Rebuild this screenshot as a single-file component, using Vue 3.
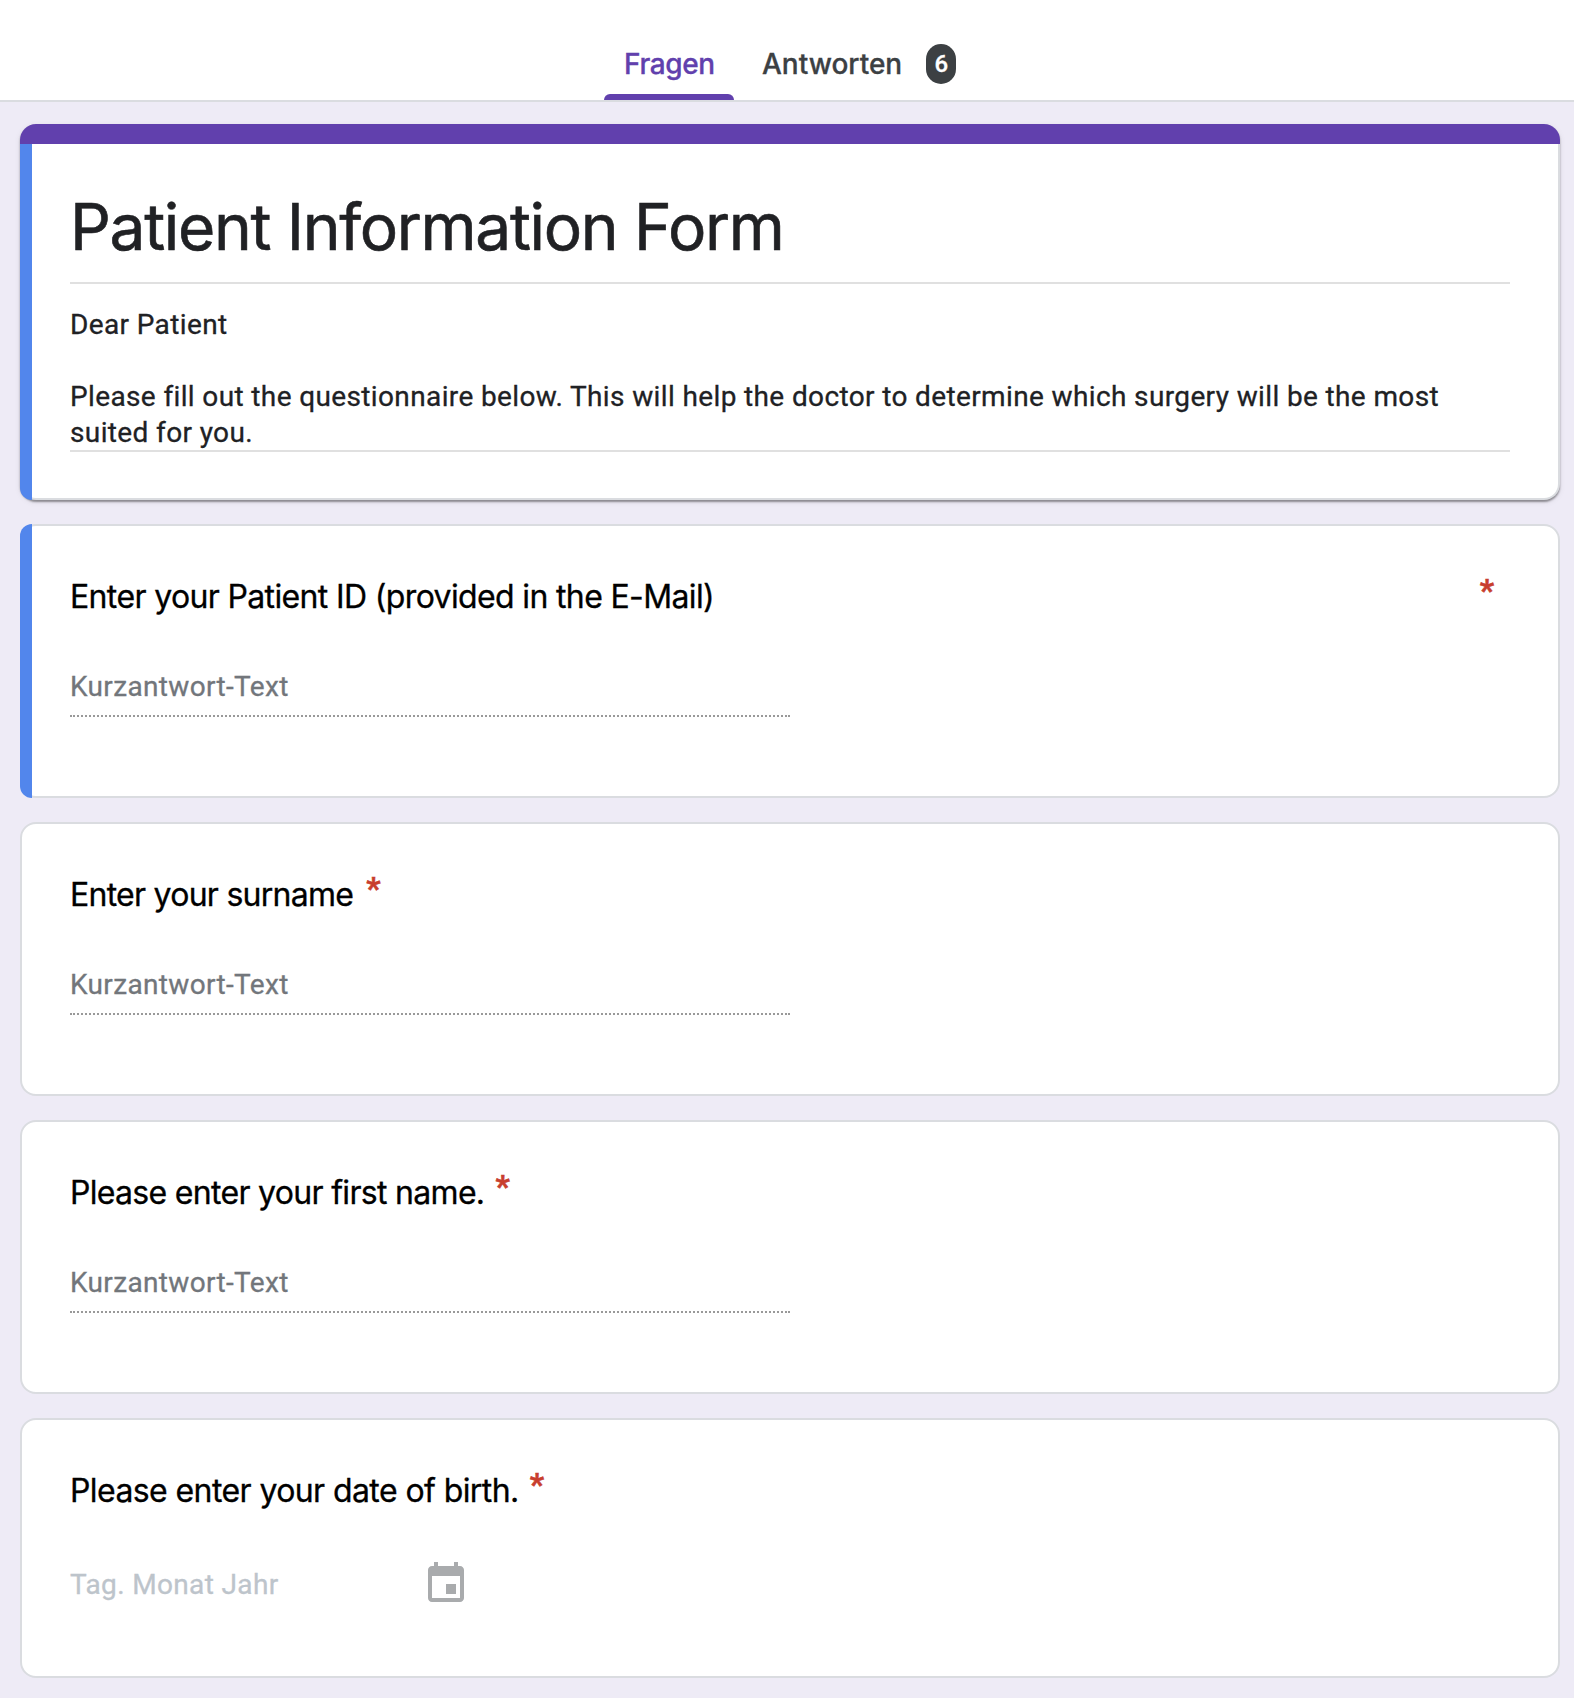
<script setup>
const intro =
  'Dear Patient\n\nPlease fill out the questionnaire below. This will help the doctor to determine which surgery will be the most suited for you.'

const questions = [
  { text: 'Enter your Patient ID (provided in the E-Mail)', type: 'text', active: true, key: 'id' },
  { text: 'Enter your surname', type: 'text', key: 'surname' },
  { text: 'Please enter your first name.', type: 'text', key: 'first' },
  { text: 'Please enter your date of birth.', type: 'date', key: 'birth' },
]
</script>

<template>
  <div class="page">
    <header class="tabs">
      <div class="tab active"><span>Fragen</span></div>
      <div class="tab answers"><span>Antworten</span><span class="badge">6</span></div>
    </header>

    <main class="cards">
      <section class="card intro">
        <h1 class="title">Patient Information Form</h1>
        <div class="description">{{ intro }}</div>
      </section>

      <section
        v-for="q in questions"
        :key="q.key"
        class="card question"
        :class="[q.key, { selected: q.active, date: q.type === 'date' }]"
      >
        <div class="heading">
          <span class="label">{{ q.text }}</span>
          <span class="required">*</span>
        </div>
        <div v-if="q.type === 'text'" class="short-answer">Kurzantwort-Text</div>
        <div v-else class="date-answer">
          <span class="date-hint">Tag. Monat Jahr</span>
          <svg width="48" height="48" viewBox="0 0 24 24" fill="#a9abad">
            <path d="M17 12h-5v5h5v-5zM16 1v2H8V1H6v2H5c-1.110 0-2 .9-2 2v14c0 1.100.89 2 2 2h14c1.100 0 2-.9 2-2V5c0-1.100-.9-2-2-2h-1V1h-2zm3 18H5V8h14v11z" />
          </svg>
        </div>
      </section>
    </main>
  </div>
</template>

<style>
body {
  background: #eeebf6;
}
</style>

<style scoped>
.page {
  width: 1574px;
  height: 1698px;
  overflow: hidden;
  box-sizing: border-box;
  background: #eeebf6;
  font-family: Roboto, sans-serif;
  color: #202124;
  -webkit-text-stroke-width: 0.3px;
}
.page * {
  box-sizing: border-box;
}
.tabs {
  display: flex;
  height: 102px;
  padding: 28px 0 0 604px;
  background: #fff;
  border-bottom: 2px solid #dadce0;
  font: 500 28px/73px Inter, sans-serif;
}
.tab {
  display: flex;
  color: #3c4043;
}
.tab.active {
  position: relative;
  width: 130px;
  padding-left: 20px;
  color: #6140ad;
  letter-spacing: -0.4px;
}
.tab.active::after {
  content: '';
  position: absolute;
  left: 0;
  bottom: 0;
  width: 130px;
  height: 6px;
  border-radius: 6px 6px 0 0;
  background: #6140ad;
}
.answers {
  padding-left: 28px;
}
.badge {
  width: 30px;
  height: 40px;
  margin: 16px 0 0 24px;
  border-radius: 15px;
  background: #3c4043;
  color: #fff;
  font: 500 24px/40px Roboto, sans-serif;
  text-align: center;
}
.cards {
  display: flex;
  flex-direction: column;
  gap: 24px;
  padding: 22px 14px 0 20px;
}
.card {
  position: relative;
  height: 274px;
  padding: 47px 48px 0;
  border: 2px solid #dadce0;
  border-radius: 16px;
  background: #fff;
}
.intro {
  height: 376px;
  padding-top: 63px;
  border-width: 0 2px 2px;
  box-shadow: 0 2px 2px rgba(0, 0, 0, 0.38), 0 2px 6px rgba(0, 0, 0, 0.08);
}
.intro::after {
  content: '';
  position: absolute;
  top: 0;
  left: -2px;
  right: -2px;
  height: 20px;
  border-radius: 16px 16px 0 0;
  background: #6140ad;
}
.intro::before,
.selected::before {
  content: '';
  position: absolute;
  top: -2px;
  bottom: -2px;
  left: -2px;
  width: 12px;
  border-radius: 12px 0 0 12px;
  background: #5286ec;
}
.intro::before {
  top: 20px;
  border-radius: 0 0 0 12px;
}
.title {
  height: 97px;
  margin: 0;
  border-bottom: 2px solid #e0e0e0;
  font: 400 64px/80px Inter, sans-serif;
  letter-spacing: -1.31px;
  -webkit-text-stroke-width: 0.6px;
}
.description {
  height: 168px;
  padding-top: 23px;
  border-bottom: 2px solid #e0e0e0;
  font-size: 28px;
  line-height: 36px;
  letter-spacing: 0.37px;
  white-space: pre-wrap;
}
.heading {
  display: flex;
  height: 48px;
  color: #000;
  font: 400 32px/48px Inter, sans-serif;
}
.required {
  margin: -7px 0 0 13px;
  color: #c83e2e;
  font: 600 32px/48px Roboto, sans-serif;
  -webkit-text-stroke-width: 0.6px;
}
.id .label {
  letter-spacing: -0.64px;
}
.id .required {
  margin-left: auto;
  margin-right: 16px;
}
.surname .label {
  letter-spacing: -0.74px;
}
.first .label {
  letter-spacing: -0.69px;
}
.birth .label {
  letter-spacing: -0.59px;
}
.first .required,
.birth .required {
  margin-left: 11px;
}
.short-answer {
  width: 720px;
  height: 50px;
  margin-top: 46px;
  color: #72767b;
  font-size: 28px;
  line-height: 40px;
  letter-spacing: 0.34px;
  background:
    linear-gradient(#999, #999) 0 100% / 2px 2px no-repeat,
    linear-gradient(#999, #999) 100% 100% / 2px 2px no-repeat,
    repeating-linear-gradient(90deg, #999 0 2px, transparent 2px 4px) 3px 100% / 714px 2px no-repeat;
}
.date {
  height: 260px;
}
.date-answer {
  display: flex;
  width: 400px;
  margin-top: 45px;
  justify-content: space-between;
  color: #bdc4cb;
  font-size: 28px;
  letter-spacing: 0.35px;
}
.date-hint {
  line-height: 50px;
}
</style>
